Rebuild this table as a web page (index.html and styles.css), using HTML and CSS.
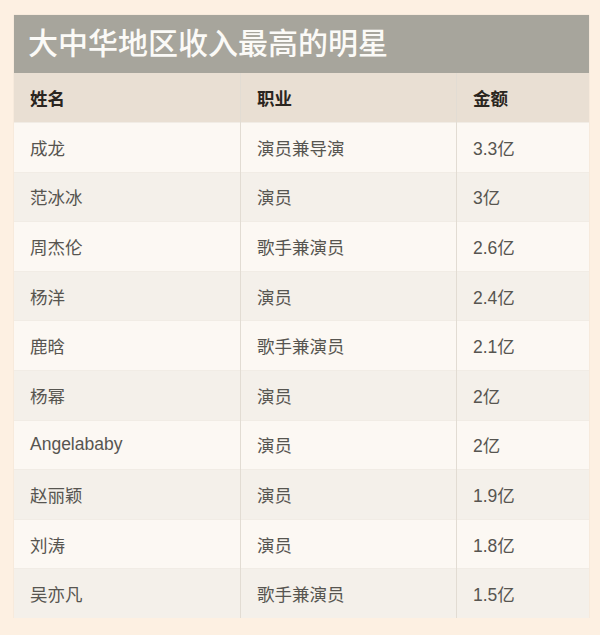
FILE: index.html
```html
<!DOCTYPE html>
<html lang="zh">
<head>
<meta charset="utf-8">
<link rel="stylesheet" href="styles.css">
</head>
<body>
<div class="card">
  <div class="title">大中华地区收入最高的明星</div>
  <table class="stars">
    <thead>
      <tr><th class="c1">姓名</th><th class="c2">职业</th><th class="c3">金额</th></tr>
    </thead>
    <tbody>
      <tr><td>成龙</td><td>演员兼导演</td><td>3.3亿</td></tr>
      <tr><td>范冰冰</td><td>演员</td><td>3亿</td></tr>
      <tr><td>周杰伦</td><td>歌手兼演员</td><td>2.6亿</td></tr>
      <tr><td>杨洋</td><td>演员</td><td>2.4亿</td></tr>
      <tr><td>鹿晗</td><td>歌手兼演员</td><td>2.1亿</td></tr>
      <tr><td>杨幂</td><td>演员</td><td>2亿</td></tr>
      <tr><td>Angelababy</td><td>演员</td><td>2亿</td></tr>
      <tr><td>赵丽颖</td><td>演员</td><td>1.9亿</td></tr>
      <tr><td>刘涛</td><td>演员</td><td>1.8亿</td></tr>
      <tr><td>吴亦凡</td><td>歌手兼演员</td><td>1.5亿</td></tr>
    </tbody>
  </table>
</div>
</body>
</html>
```
FILE: styles.css
```css
html, body {
  margin: 0;
  padding: 0;
  background: #fdf0e2;
}
body {
  padding: 15px 11px 0 14px;
  font-family: "Liberation Sans", "Noto Sans CJK SC", sans-serif;
}
.card {
  width: 575px;
  box-shadow: 0 0 1px rgba(0,0,0,0.15);
}
.title {
  height: 58px;
  box-sizing: border-box;
  background: #a7a59c;
  color: #fbfaf7;
  font-size: 30px;
  font-weight: 500;
  line-height: 58px;
  padding-left: 14px;
}
.stars {
  width: 100%;
  border-collapse: collapse;
  table-layout: fixed;
}
.stars th, .stars td {
  text-align: left;
  padding: 0 0 0 16px;
  font-size: 17.5px;
  border-left: 1px solid #e2dcd3;
}
.stars th:first-child, .stars td:first-child {
  border-left: none;
}
.stars th {
  height: 49px;
  background: #e9dfd3;
  color: #2a2520;
  font-weight: bold;
}
.c1 { width: 210px; }
.c2 { width: 199px; }
.stars td {
  height: 48.6px;
  color: #575550;
  border-top: 1px solid #f1ece5;
}
.stars tbody tr:nth-child(odd) td { background: #fcf8f3; }
.stars tbody tr:nth-child(even) td { background: #f4f0ea; }
```
